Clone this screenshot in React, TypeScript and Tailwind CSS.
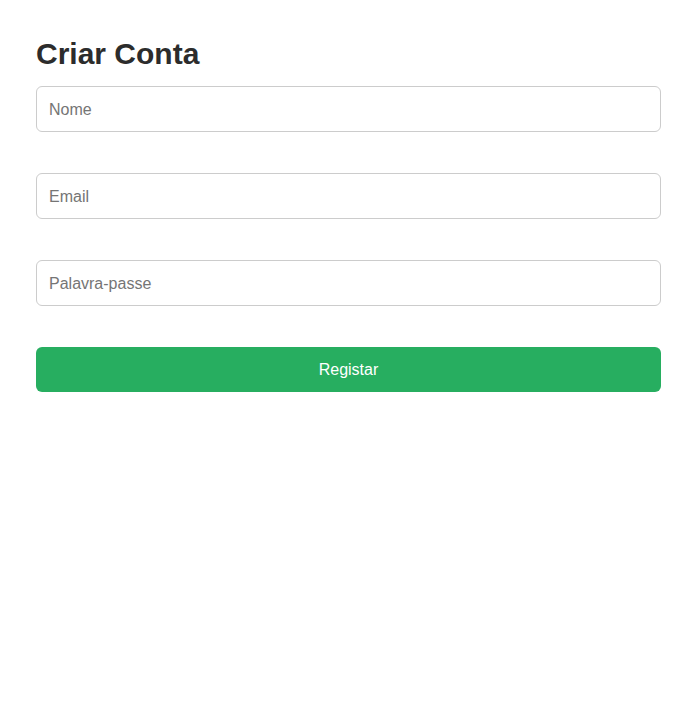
import React, { useState } from 'react';

const App: React.FC = () => {
  const [nome, setNome] = useState('');
  const [email, setEmail] = useState('');
  const [pass, setPass] = useState('');

  const inputCls =
    'block w-full h-[46px] px-[12px] pt-[2px] border border-[#cccccc] rounded-[6px] bg-white text-[16px] text-[#333333] placeholder-[#757575] focus:outline-none';

  return (
    <div className="min-h-screen bg-white px-[36px] pt-[37px]" style={{ fontFamily: '"Liberation Sans", Arial, sans-serif' }}>
      <h2 className="text-[30px] leading-[34px] font-bold text-[#2c2c2c]">Criar Conta</h2>

      <form className="mt-[15px] flex flex-col gap-[41px]" onSubmit={(e) => e.preventDefault()}>
        <input type="text" value={nome} onChange={(e) => setNome(e.target.value)} placeholder="Nome" className={inputCls} />
        <input type="email" value={email} onChange={(e) => setEmail(e.target.value)} placeholder="Email" className={inputCls} />
        <input type="password" value={pass} onChange={(e) => setPass(e.target.value)} placeholder="Palavra-passe" className={inputCls} />
        <button type="submit" className="w-full h-[45px] rounded-[6px] bg-[#27ae60] text-white text-[16px]">
          Registar
        </button>
      </form>
    </div>
  );
};

export default App;
